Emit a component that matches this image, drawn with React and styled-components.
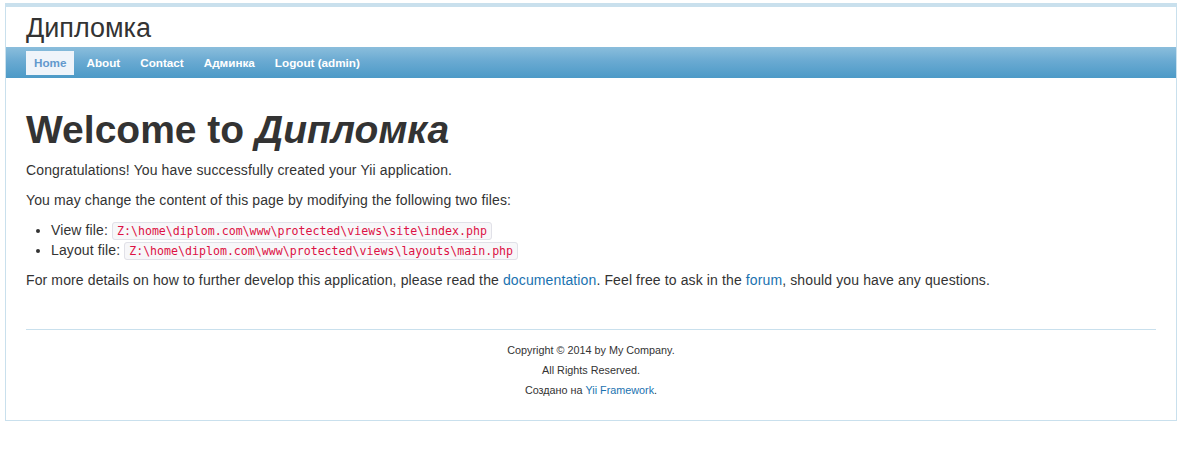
import React from "react";
import styled, { createGlobalStyle } from "styled-components";

const Global = createGlobalStyle`
  html, body { margin: 0; padding: 0; background: #fff; }
  body {
    font-family: "Liberation Sans", Arial, Helvetica, sans-serif;
    font-size: 14px;
    line-height: 20px;
    color: #333;
  }
`;

const Page = styled.div`
  box-sizing: border-box;
  width: 1172px;
  margin: 3px 0 0 5px;
  border: 1px solid #c9e0ed;
  border-top: 4px solid #c9e0ed;
  background: #fff;
`;

const Header = styled.div`
  height: 40px;
  display: flex;
  align-items: center;
  padding: 0 20px;
`;

const Logo = styled.div`
  font-size: 27px;
  line-height: 30px;
  color: #333;
  padding-top: 2px;
`;

const Menu = styled.ul`
  display: flex;
  gap: 4px;
  list-style: none;
  margin: 0;
  padding: 4px 20px 3px;
  background: linear-gradient(to bottom, #8bbedc 0%, #6aaad2 45%, #4c9ac7 100%);
`;

const MenuLink = styled.a`
  display: block;
  padding: 5px 8px;
  font-size: 11.7px;
  line-height: 14px;
  font-weight: bold;
  text-decoration: none;
  color: ${(p) => (p.$active ? "#6399cd" : "#fff")};
  background: ${(p) => (p.$active ? "#eff4fa" : "transparent")};
`;

const Content = styled.div`
  padding: 22px 20px 29px;
  letter-spacing: 0.12px;
`;

const Title = styled.h1`
  margin: 10px 0;
  font-size: 39px;
  line-height: 40px;
  font-weight: bold;
  color: #333;
  letter-spacing: 0;
`;

const Para = styled.p`
  margin: 0 0 10px;
`;

const Files = styled.ul`
  margin: 0 0 10px 25px;
  padding: 0;
`;

const Code = styled.code`
  font-family: "DejaVu Sans Mono", "Liberation Mono", monospace;
  font-size: 11.6px;
  line-height: 14px;
  letter-spacing: 0;
  color: #d14;
  background: #f7f7f9;
  border: 1px solid #e1e1e8;
  border-radius: 3px;
  padding: 1px 4px;
`;

const Link = styled.a`
  color: #1a72b0;
  text-decoration: none;
`;

const Footer = styled.div`
  margin: 0 20px;
  padding: 10px 20px 20px;
  border-top: 1px solid #c9e0ed;
  text-align: center;
  font-size: 10.8px;
  line-height: 20px;
  color: #333;
`;

const menu = ["Home", "About", "Contact", "Админка", "Logout (admin)"];

export default function App() {
  return (
    <>
      <Global />
      <Page>
        <Header>
          <Logo>Дипломка</Logo>
        </Header>
        <Menu>
          {menu.map((m, i) => (
            <li key={m}>
              <MenuLink href="#" $active={i === 0}>
                {m}
              </MenuLink>
            </li>
          ))}
        </Menu>
        <Content>
          <Title>
            Welcome to <i>Дипломка</i>
          </Title>
          <Para>Congratulations! You have successfully created your Yii application.</Para>
          <Para>You may change the content of this page by modifying the following two files:</Para>
          <Files>
            <li>
              View file: <Code>Z:\home\diplom.com\www\protected\views\site\index.php</Code>
            </li>
            <li>
              Layout file: <Code>Z:\home\diplom.com\www\protected\views\layouts\main.php</Code>
            </li>
          </Files>
          <Para>
            For more details on how to further develop this application, please read the{" "}
            <Link href="#">documentation</Link>. Feel free to ask in the <Link href="#">forum</Link>,
            should you have any questions.
          </Para>
        </Content>
        <Footer>
          Copyright © 2014 by My Company.
          <br />
          All Rights Reserved.
          <br />
          Создано на <Link href="#">Yii Framework</Link>.
        </Footer>
      </Page>
    </>
  );
}
